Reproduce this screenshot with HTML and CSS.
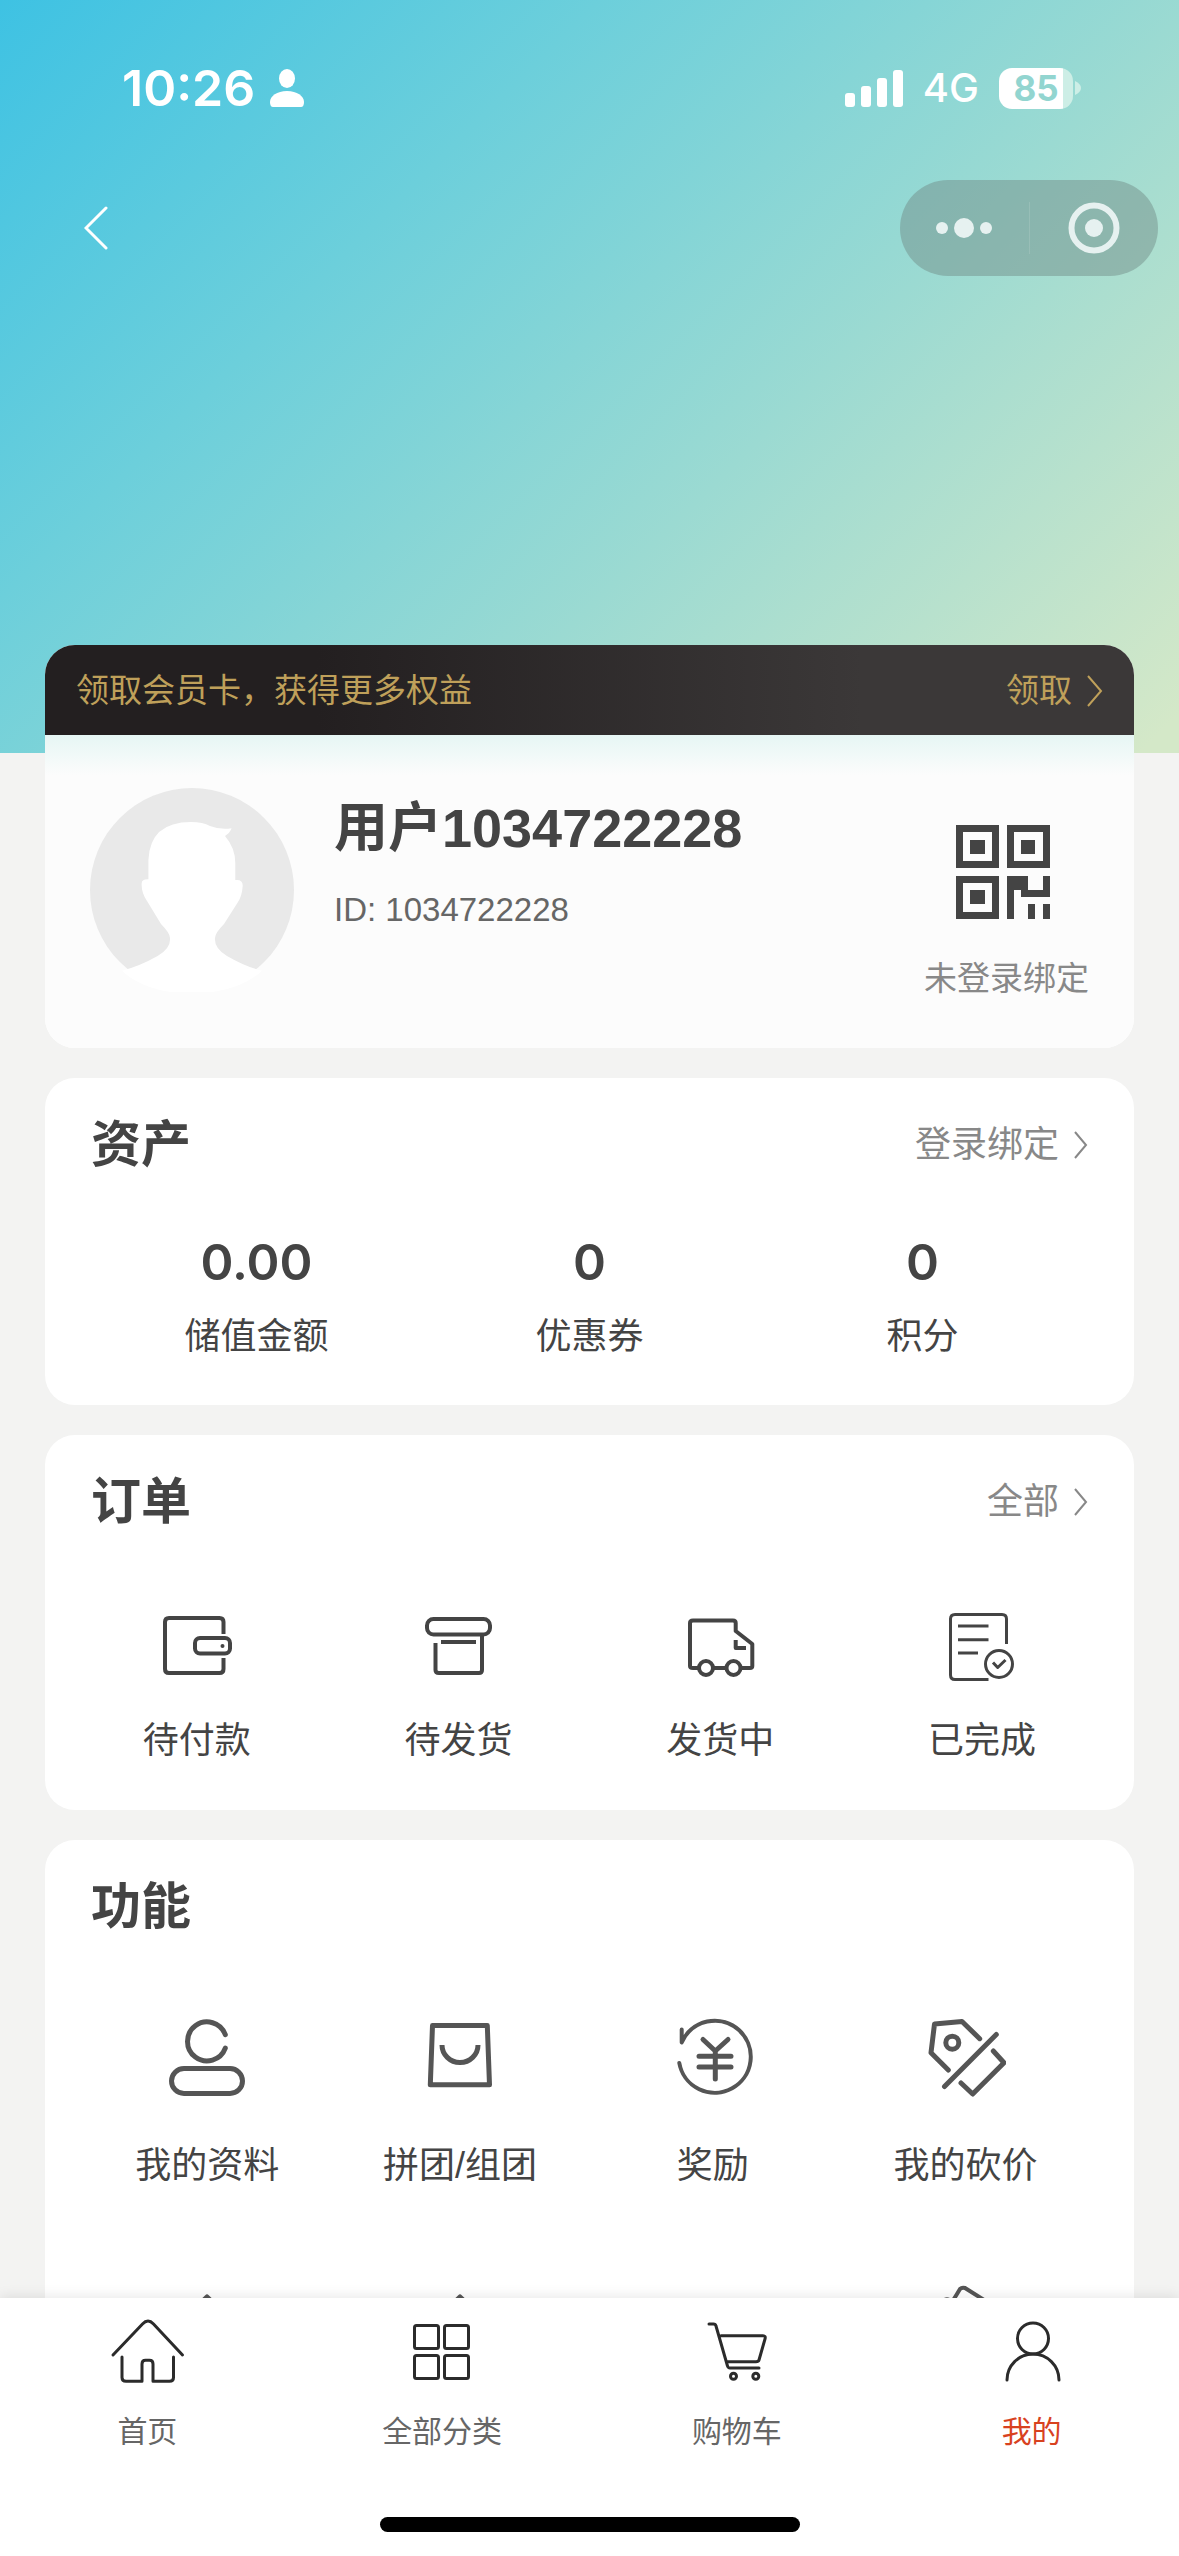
FILE: index.html
```html
<!DOCTYPE html>
<html lang="zh-CN">
<head>
<meta charset="utf-8">
<meta name="viewport" content="width=device-width, initial-scale=1">
<title>我的</title>
<link rel="stylesheet" href="styles.css">
</head>
<body>
<div class="app">
  <main class="page">
    <div class="status">
      <div class="status-left">
        <span class="clock">10:26</span>
        <svg class="focus" viewBox="0 0 34 38" aria-hidden="true"><ellipse cx="17" cy="9.500" rx="8" ry="9.500"/><path d="M0 33C0 27 7 22 17 22S34 27 34 33Q34 38 31 38H3Q0 38 0 33Z"/></svg>
      </div>
      <div class="status-right">
        <svg class="signal" viewBox="0 0 58 38" aria-hidden="true"><rect y="24" width="10" height="14" rx="3"/><rect x="16" y="17" width="10" height="21" rx="3"/><rect x="32" y="9" width="10" height="29" rx="3"/><rect x="48" y="1" width="10" height="37" rx="3"/></svg>
        <span class="network">4G</span>
        <span class="battery"><span class="battery-body">85</span><svg class="battery-tip" viewBox="0 0 6 14" aria-hidden="true"><path d="M0 0Q6 3 6 7T0 14Z"/></svg></span>
      </div>
    </div>

    <header class="nav">
      <button class="back" type="button" aria-label="返回"><svg viewBox="0 0 24 44"><path d="M22 2L2 22L22 42"/></svg></button>
      <div class="capsule">
        <button type="button" aria-label="更多"><svg viewBox="0 0 56 20"><circle cx="6" cy="10" r="6"/><circle cx="28" cy="10" r="10"/><circle cx="50" cy="10" r="6"/></svg></button>
        <button type="button" aria-label="关闭"><svg class="target" viewBox="0 0 52 52"><circle class="ring" cx="26" cy="26" r="22.500"/><circle cx="26" cy="26" r="9"/></svg></button>
      </div>
    </header>

    <div class="cards">
      <section class="profile-card">
        <a class="member" href="#card">
          <span>领取会员卡，获得更多权益</span>
          <span class="more">领取<svg class="arrow arrow-large" viewBox="0 0 16 32"><path d="M1 1L14 16L1 31"/></svg></span>
        </a>
        <div class="profile">
          <svg class="avatar" viewBox="0 0 204 204" aria-hidden="true">
            <circle class="avatar-bg" cx="102" cy="102" r="102"/>
            <path class="avatar-figure" d="M141.600 40.300Q140 45 135 48Q145.300 60 145.300 75V92Q153 91 152.700 98Q152 108 148 114L134 136Q125 145 125 150Q124 160 137 168Q156 179 172 182.700Q150 204 102 206Q54 204 32 182.700Q50 178 67.600 168Q81 160 80 150Q80 145 71 136L57 113Q51 104 51.700 95Q52 91 58.400 91.300V72Q60 34 101 34Q113 34 120 38Q130 42 141.600 40.300Z"/>
          </svg>
          <div class="identity">
            <h1>用户1034722228</h1>
            <p>ID: 1034722228</p>
          </div>
          <button class="bind" type="button">
            <svg class="qr" viewBox="0 0 14 13" shape-rendering="crispEdges" aria-hidden="true"><path fill-rule="evenodd" d="M0 0h6v6H0zM1 1v4h4V1zM2 2h2v2H2zM7 0h6v6H7zM8 1v4h4V1zM9 2h2v2H9zM0 7h6v6H0zM1 8v4h4V8zM2 9h2v2H2zM7 7h3v2h2V7h1v3H9V9H8v4H7zM10 11h1v2h-1zM12 11h1v2h-1z"/></svg>
            <span>未登录绑定</span>
          </button>
        </div>
      </section>

      <section class="card">
        <div class="card-head">
          <h2>资产</h2>
          <a class="more" href="#bind">登录绑定<svg class="arrow" viewBox="0 0 14 28"><path d="M1 1L12 14L1 27"/></svg></a>
        </div>
        <div class="assets">
          <div class="asset"><strong>0.00</strong><span>储值金额</span></div>
          <div class="asset"><strong>0</strong><span>优惠券</span></div>
          <div class="asset"><strong>0</strong><span>积分</span></div>
        </div>
      </section>

      <section class="card">
        <div class="card-head">
          <h2>订单</h2>
          <a class="more" href="#orders">全部<svg class="arrow" viewBox="0 0 14 28"><path d="M1 1L12 14L1 27"/></svg></a>
        </div>
        <div class="orders">
          <a class="entry" href="#unpaid">
            <svg viewBox="0 0 72 72"><path d="M62.500 24V12Q62.500 8 58.500 8H8Q4 8 4 12V59Q4 63 8 63H58.500Q62.500 63 62.500 59V48"/><rect x="34" y="28" width="35" height="15.500" rx="5"/><circle class="dot" cx="61.500" cy="36" r="2"/></svg>
            <span>待付款</span>
          </a>
          <a class="entry" href="#unsent">
            <svg viewBox="0 0 72 72"><rect x="4" y="9" width="63" height="15.500" rx="6.500"/><path d="M59 25V60Q59 63 56 63H16Q12.500 63 12.500 60V33M18 32H53"/></svg>
            <span>待发货</span>
          </a>
          <a class="entry" href="#sent">
            <svg viewBox="0 0 72 72"><path d="M15 58H9Q6 58 6 56V13Q6 10.500 9 10.500H49Q51.700 10.500 51.700 13V21L68.300 34V56Q68.300 58 66 58H56.500M29 58H42.500M51.700 30V38H62"/><circle cx="22" cy="58" r="7"/><circle cx="49.500" cy="58" r="7"/></svg>
            <span>发货中</span>
          </a>
          <a class="entry" href="#done">
            <svg class="fine" viewBox="0 0 72 72"><path d="M60.500 34V9Q60.500 4.500 56 4.500H9Q4.500 4.500 4.500 9V65Q4.500 69.500 9 69.500H42.500M12 16H42.500M12 29.700H42.500M12 43H32M47 52.500L51.700 57.500L59.500 50"/><circle cx="53" cy="54" r="13.500"/></svg>
            <span>已完成</span>
          </a>
        </div>
      </section>

      <section class="card">
        <div class="card-head"><h2>功能</h2></div>
        <div class="features">
          <a class="entry" href="#info">
            <svg viewBox="0 0 80 80"><path d="M58.300 16.700A19.500 19.500 0 1 0 58.300 30.200"/><rect x="4.500" y="50.500" width="71" height="25" rx="12.500"/></svg>
            <span>我的资料</span>
          </a>
          <a class="entry" href="#group">
            <svg class="butt" viewBox="0 0 80 80"><path d="M12.500 7.500H67.300L69.500 66.800H10.300ZM22 27A18 17.500 0 0 0 58 27"/></svg>
            <span>拼团/组团</span>
          </a>
          <a class="entry" href="#reward">
            <svg viewBox="0 0 80 80"><path class="thin" d="M6.300 45A36 36 0 1 0 8.700 24.500V11.500"/><path d="M30 21.500L42.300 33L55 21.500M42.300 33V61M26 38.200H58M26 49H58"/></svg>
            <span>奖励</span>
          </a>
          <a class="entry" href="#bargain">
            <svg viewBox="0 0 80 80"><path d="M53.700 20.700L36 3.500L8.500 6L5 34.700L22.300 52M70.300 16.500L18.500 68.500M67.300 33L78 44.700L46.700 76L35 65"/><circle cx="26.300" cy="24.700" r="6.500"/></svg>
            <span>我的砍价</span>
          </a>
          <a class="entry" href="#address"><svg viewBox="0 0 80 80"><path d="M8 44L40 13L72 44M16 44V74H64V44"/></svg></a>
          <a class="entry" href="#store"><svg viewBox="0 0 80 80"><path d="M8 44L40 13L72 44M16 44V74H64V44"/></svg></a>
          <a class="entry" href="#help"><svg viewBox="0 0 80 80"><circle cx="40" cy="48" r="26"/></svg></a>
          <a class="entry" href="#coupon"><svg class="thin" viewBox="0 0 80 80"><path d="M31 10L34 5Q36 3 39 4L74 26L46 70L10 44ZM15 19Q20 13 25 17"/></svg></a>
        </div>
      </section>
    </div>
  </main>

  <footer class="dock">
    <nav class="tabs">
      <a class="tab" href="#home"><svg viewBox="0 0 80 72"><path d="M6 39L35.500 8Q41 2 46.500 8L75.500 39M15 41V61.500Q15 65.300 19 65.300H35V48Q35 44.300 38.500 44.300H42.500Q46 44.300 46 48V65.300H62.500Q66.500 65.300 66.500 61.500V41"/></svg><span>首页</span></a>
      <a class="tab" href="#category"><svg viewBox="0 0 80 72"><rect x="12.500" y="9.500" width="24" height="23" rx="2"/><rect x="42.500" y="9.500" width="24" height="23" rx="2"/><rect x="12.500" y="39.500" width="24" height="23" rx="2"/><rect x="42.500" y="39.500" width="24" height="23" rx="2"/></svg><span>全部分类</span></a>
      <a class="tab" href="#cart"><svg viewBox="0 0 80 72"><path d="M12 8H16.500Q18.500 8 19 10L30.500 50Q31 52 33 52H62M24 19.700H66Q69 19.700 68 23L62 44Q61.500 45.700 59 45.700H30"/><circle cx="36.500" cy="60.300" r="3"/><circle cx="58.800" cy="60.300" r="3"/></svg><span>购物车</span></a>
      <a class="tab active" href="#me" aria-current="page"><svg viewBox="0 0 80 72"><circle cx="41" cy="22.500" r="15.500"/><path d="M15 64A26 26 0 0 1 67 64"/></svg><span>我的</span></a>
    </nav>
    <div class="home-indicator"></div>
  </footer>
</div>
</body>
</html>
```

FILE: styles.css
```css
* {
  box-sizing: border-box;
}

body,
h1,
h2,
p {
  margin: 0;
}

body {
  color: #444;
  background: #f3f3f2;
  font-family: "Liberation Sans", "Noto Sans CJK SC", sans-serif;
  font-size: 36px;
  line-height: 48px;
}

a {
  color: inherit;
  text-decoration: none;
}

button {
  padding: 0;
  border: 0;
  background: none;
  color: inherit;
  font: inherit;
}

svg {
  display: block;
  flex: none;
}

.app {
  display: flex;
  flex-direction: column;
  height: 100vh;
}

.page {
  flex: 1;
  min-height: 0;
  overflow-y: auto;
  scrollbar-width: none;
  background: linear-gradient(135deg, #3ec2e3 0%, #6ccfdb 31%, #9bdad2 62%, #d4e8c8 98%) no-repeat 0 0 / 100% 753px;
}

/* Status bar */

.status {
  display: flex;
  justify-content: space-between;
  margin-top: 60px;
  padding: 0 98px 0 122px;
  height: 56px;
  color: #fff;
  font-family: Inter, "Liberation Sans", sans-serif;
}

.status-left,
.status-right,
.battery {
  display: flex;
  align-items: center;
}

.status-left {
  gap: 15px;
}

.clock {
  font-size: 50px;
  font-weight: 600;
}

.focus {
  width: 34px;
  height: 38px;
  fill: #fff;
}

.status-right {
  gap: 20px;
}

.signal {
  width: 58px;
  height: 38px;
  fill: #fff;
}

.network {
  font-size: 40px;
  font-weight: 500;
}

.battery {
  gap: 2px;
}

.battery-body {
  width: 74px;
  border-radius: 13px;
  background: linear-gradient(90deg, #fff 64px, #cdeee6 64px);
  color: #92d5d0;
  font-size: 35px;
  font-weight: 700;
  line-height: 41px;
  text-align: center;
}

.battery-tip {
  width: 6px;
  height: 14px;
  fill: #cdeee6;
}

/* Navigation */

.nav {
  display: flex;
  align-items: center;
  justify-content: space-between;
  margin: 64px 21px 369px 84px;
}

.back svg {
  width: 24px;
  height: 44px;
  fill: none;
  stroke: #fff;
  stroke-width: 3;
  stroke-linecap: round;
}

.capsule {
  display: flex;
  align-items: center;
  width: 258px;
  height: 96px;
  border-radius: 48px;
  background: rgb(110 135 130 / 45%);
}

.capsule button {
  display: flex;
  flex: 1;
  justify-content: center;
}

.capsule button + button {
  border-left: 1px solid rgb(255 255 255 / 12%);
}

.capsule svg {
  width: 56px;
  fill: #e6f1f0;
}

.capsule .target {
  width: 52px;
}

.ring {
  fill: none;
  stroke: #e6f1f0;
  stroke-width: 6;
}

/* Cards */

.cards {
  display: flex;
  flex-direction: column;
  gap: 30px;
  padding: 0 45px 30px;
}

.profile-card,
.card {
  border-radius: 30px;
  background: #fff;
}

.profile-card {
  overflow: hidden;
}

.member {
  display: flex;
  align-items: center;
  justify-content: space-between;
  height: 90px;
  padding: 2px 31px 0;
  background: linear-gradient(90deg, #231f20 25%, #3b3838 75%);
  color: #bfa05a;
  font-size: 33px;
}

.more {
  display: flex;
  align-items: center;
  gap: 15px;
}

.arrow {
  width: 14px;
  height: 28px;
  fill: none;
  stroke: currentColor;
  stroke-width: 2;
}

.arrow-large {
  width: 16px;
  height: 32px;
}

.profile {
  display: flex;
  padding: 53px 45px 45px;
  background: linear-gradient(#e6f6f4, #fcfcfc 40px);
}

.avatar {
  width: 204px;
  height: 204px;
}

.avatar-bg {
  fill: #e9e9e9;
}

.avatar-figure {
  fill: #fff;
}

.identity {
  flex: 1;
  padding: 10px 0 0 40px;
}

.identity h1 {
  font-size: 54px;
  line-height: 60px;
}

.identity p {
  margin-top: 28px;
  color: #666;
  font-size: 33px;
}

.bind {
  display: flex;
  flex-direction: column;
  align-items: center;
  gap: 36px;
  padding-top: 37px;
  color: #888;
  font-size: 33px;
}

.qr {
  width: 101px;
  height: 94px;
  fill: #444;
}

.card-head {
  display: flex;
  align-items: center;
  justify-content: space-between;
  padding: 37px 46px 0;
}

.card-head h2 {
  font-size: 50px;
  line-height: 60px;
}

.card-head .more {
  color: #888;
}

.assets {
  display: grid;
  grid-template-columns: repeat(3, 1fr);
  padding: 57px 45px 44px;
}

.asset {
  display: flex;
  flex-direction: column;
  align-items: center;
  gap: 21px;
}

.asset strong {
  font-family: Inter, "Liberation Sans", sans-serif;
  font-size: 50px;
  font-weight: 600;
  line-height: 60px;
}

.orders,
.features {
  display: grid;
  grid-template-columns: repeat(4, 1fr);
}

.orders {
  padding: 78px 21px 45px;
}

.features {
  row-gap: 94px;
  padding: 81px 42px 45px 36px;
}

.entry {
  display: flex;
  flex-direction: column;
  align-items: center;
}

.entry svg {
  fill: none;
  stroke: #444;
  stroke-linecap: round;
  stroke-linejoin: round;
}

.orders .entry {
  gap: 35px;
}

.orders svg {
  width: 72px;
  height: 72px;
  stroke-width: 4;
  stroke-linecap: butt;
}

.orders .fine {
  stroke-width: 3;
}

.entry .dot {
  fill: #444;
  stroke: none;
}

.features .entry {
  gap: 44px;
}

.features svg {
  width: 80px;
  height: 80px;
  stroke: #555;
  stroke-width: 5;
}

.features .butt {
  stroke-linecap: butt;
}

.features .thin {
  stroke-width: 4;
}

/* Bottom tabs */

.dock {
  position: relative;
  padding: 18px 0 24px;
  background: #fff;
  box-shadow: 0 -2px 12px rgb(0 0 0 / 9%);
}

.tabs {
  display: grid;
  grid-template-columns: repeat(4, 1fr);
}

.tab {
  display: flex;
  flex-direction: column;
  align-items: center;
  gap: 20px;
  color: #666;
  font-size: 30px;
}

.tab svg {
  width: 80px;
  height: 72px;
  fill: none;
  stroke: #2b2b2b;
  stroke-width: 3;
  stroke-linecap: round;
  stroke-linejoin: round;
}

.tab.active {
  color: #d8421f;
}

.home-indicator {
  width: 420px;
  height: 15px;
  margin: 61px auto 0;
  border-radius: 8px;
  background: #000;
}
```
